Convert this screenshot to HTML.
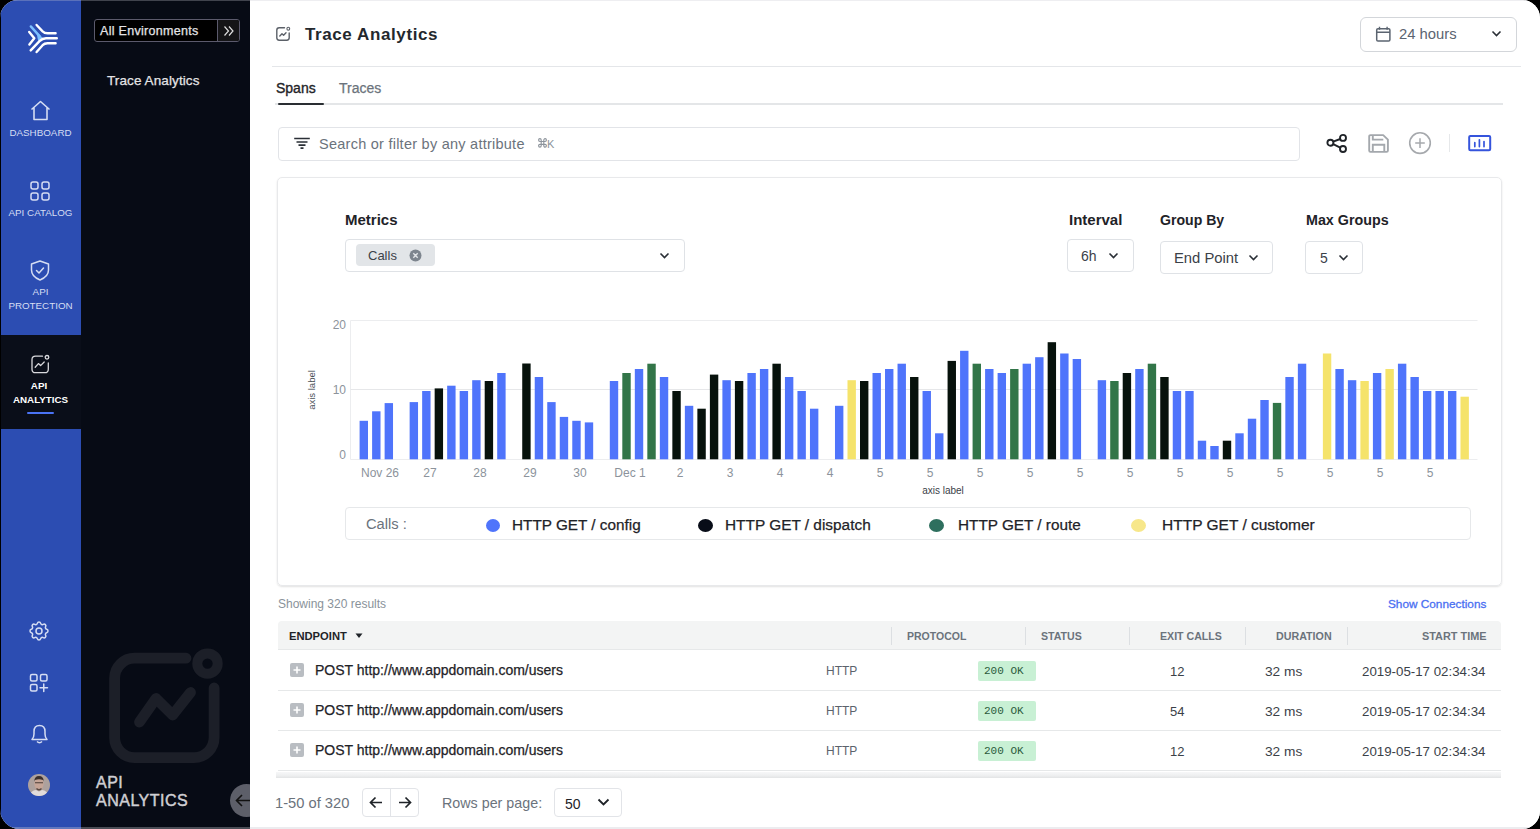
<!DOCTYPE html>
<html><head><meta charset="utf-8">
<style>
*{box-sizing:border-box;margin:0;padding:0}
html,body{width:1540px;height:829px;background:#000;overflow:hidden;font-family:"Liberation Sans",sans-serif}
.abs{position:absolute}
#frame{position:absolute;left:0;top:0;width:1540px;height:829px;border-radius:18px 18px 18px 20px;overflow:hidden;background:#fff}
#nav{position:absolute;left:0;top:0;width:81px;height:829px;background:#2c4db2}
#side{position:absolute;left:81px;top:0;width:169px;height:829px;background:#070b15}
.navlbl{position:absolute;left:0;width:81px;text-align:center;color:#d5ddf3;font-size:9.8px;line-height:13px}
.t{position:absolute;white-space:nowrap}
.med{-webkit-text-stroke:0.25px currentColor}
</style></head><body>
<div id="frame">
  <div id="nav">
    <!-- logo -->
    <svg class="abs" style="left:20px;top:16px" width="44" height="44" viewBox="20 16 44 44">
      <path d="M36.3 31.8 L42.8 38.1 L38.2 41 Z" fill="#7cc0ff"/>
      <path d="M30.8 26.4 L40 36.6" stroke="#7cc0ff" stroke-width="2.4" stroke-linecap="round" fill="none"/>
      <path d="M29.2 32 L34.3 38.3 L29.4 44.6" stroke="#fff" stroke-width="2.4" stroke-linecap="round" stroke-linejoin="round" fill="none"/>
      <path d="M36.6 25 L42.6 31.4 Q44.5 33.3 47.5 33.3 L55.6 33.3" stroke="#fff" stroke-width="2.4" stroke-linecap="round" fill="none"/>
      <path d="M36.6 52 L42.6 45.2 Q44.5 43.3 47.5 43.3 L55.6 43.3" stroke="#fff" stroke-width="2.4" stroke-linecap="round" fill="none"/>
      <path d="M30.7 50.4 L39.5 41.2 Q42.5 38.3 46 38.3 L56.8 38.3" stroke="#fff" stroke-width="2.4" stroke-linecap="round" fill="none"/>
    </svg>
    <!-- home -->
    <svg class="abs" style="left:29px;top:100px" width="23" height="21" viewBox="0 0 23 21">
      <path d="M2.5 9.5 L11.5 1.5 L20.5 9.5 M5 7.5 V19.5 H18 V7.5" stroke="#d5ddf3" stroke-width="1.6" fill="none" stroke-linejoin="round"/>
    </svg>
    <div class="navlbl" style="top:126px">DASHBOARD</div>
    <!-- catalog -->
    <svg class="abs" style="left:30px;top:181px" width="20" height="20" viewBox="0 0 20 20">
      <rect x="1" y="1" width="7" height="7" rx="2" stroke="#d5ddf3" stroke-width="1.5" fill="none"/>
      <rect x="12" y="1" width="7" height="7" rx="2" stroke="#d5ddf3" stroke-width="1.5" fill="none"/>
      <rect x="1" y="12" width="7" height="7" rx="2" stroke="#d5ddf3" stroke-width="1.5" fill="none"/>
      <rect x="12" y="12" width="7" height="7" rx="2" stroke="#d5ddf3" stroke-width="1.5" fill="none"/>
    </svg>
    <div class="navlbl" style="top:206px">API CATALOG</div>
    <!-- shield -->
    <svg class="abs" style="left:30px;top:260px" width="20" height="21" viewBox="0 0 20 21">
      <path d="M10 1 L18.5 4 V10 Q18.5 16.5 10 20 Q1.5 16.5 1.5 10 V4 Z" stroke="#d5ddf3" stroke-width="1.5" fill="none" stroke-linejoin="round"/>
      <path d="M6.5 10.5 L9 13 L13.5 8" stroke="#d5ddf3" stroke-width="1.5" fill="none" stroke-linecap="round" stroke-linejoin="round"/>
    </svg>
    <div class="navlbl" style="top:285px">API</div>
    <div class="navlbl" style="top:299px">PROTECTION</div>
    <!-- active -->
    <div class="abs" style="left:0;top:335px;width:81px;height:94px;background:#0a0e19"></div>
    <svg class="abs" style="left:30px;top:354px" width="21" height="21" viewBox="0 0 21 21">
      <path d="M12.5 2.2 H5.5 Q2 2.2 2 5.7 V15.2 Q2 18.7 5.5 18.7 H14.8 Q18.3 18.7 18.3 15.2 V9" stroke="#d9d9dd" stroke-width="1.3" fill="none" stroke-linecap="round"/>
      <circle cx="17" cy="3.3" r="1.8" stroke="#d9d9dd" stroke-width="1.3" fill="none"/>
      <path d="M5.2 13.2 L8.4 9.6 L10.6 11.6 L14.2 8" stroke="#d9d9dd" stroke-width="1.3" fill="none" stroke-linecap="round" stroke-linejoin="round"/>
    </svg>
    <div class="navlbl" style="top:379px;left:-1.5px;color:#fff;font-weight:bold">API</div>
    <div class="navlbl" style="top:393px;color:#fff;font-weight:bold">ANALYTICS</div>
    <div class="abs" style="left:26.5px;top:412px;width:27.5px;height:2px;border-radius:1px;background:#4a73f5"></div>
    <!-- gear -->
    <svg class="abs" style="left:27px;top:619px" width="24" height="24" viewBox="0 0 24 24">
      <path d="M10.325 4.317c.426 -1.756 2.924 -1.756 3.35 0a1.724 1.724 0 0 0 2.573 1.066c1.543 -.94 3.31 .826 2.37 2.37a1.724 1.724 0 0 0 1.065 2.572c1.756 .426 1.756 2.924 0 3.35a1.724 1.724 0 0 0 -1.066 2.573c.94 1.543 -.826 3.31 -2.37 2.37a1.724 1.724 0 0 0 -2.572 1.065c-.426 1.756 -2.924 1.756 -3.35 0a1.724 1.724 0 0 0 -2.573 -1.066c-1.543 .94 -3.31 -.826 -2.37 -2.37a1.724 1.724 0 0 0 -1.065 -2.572c-1.756 -.426 -1.756 -2.924 0 -3.35a1.724 1.724 0 0 0 1.066 -2.573c-.94 -1.543 .826 -3.31 2.37 -2.37c1 .608 2.296 .07 2.572 -1.065z" stroke="#d5ddf3" stroke-width="1.5" fill="none"/>
      <circle cx="12" cy="12" r="3" stroke="#d5ddf3" stroke-width="1.5" fill="none"/>
    </svg>
    <!-- apps plus -->
    <svg class="abs" style="left:29px;top:673px" width="20" height="20" viewBox="0 0 20 20">
      <rect x="1.5" y="1.5" width="6.5" height="6.5" rx="1.5" stroke="#d5ddf3" stroke-width="1.5" fill="none"/>
      <rect x="11.5" y="1.5" width="6.5" height="6.5" rx="1.5" stroke="#d5ddf3" stroke-width="1.5" fill="none"/>
      <rect x="1.5" y="11.5" width="6.5" height="6.5" rx="1.5" stroke="#d5ddf3" stroke-width="1.5" fill="none"/>
      <path d="M14.75 11 V18.5 M11 14.75 H18.5" stroke="#d5ddf3" stroke-width="1.5" stroke-linecap="round"/>
    </svg>
    <!-- bell -->
    <svg class="abs" style="left:29px;top:723px" width="21" height="22" viewBox="0 0 21 22">
      <path d="M3 16.5 Q5 14.5 5 11 V8.5 Q5 2.5 10.5 2.5 Q16 2.5 16 8.5 V11 Q16 14.5 18 16.5 Z" stroke="#d5ddf3" stroke-width="1.5" fill="none" stroke-linejoin="round"/>
      <path d="M8 18.5 Q10.5 21 13 18.5" stroke="#d5ddf3" stroke-width="1.5" fill="none"/>
    </svg>
    <!-- avatar -->
    <svg class="abs" style="left:28px;top:774px" width="22" height="22" viewBox="0 0 22 22">
      <clipPath id="avc"><circle cx="11" cy="11" r="11"/></clipPath>
      <g clip-path="url(#avc)">
        <rect width="22" height="22" fill="#ada19d"/>
        <ellipse cx="11" cy="10" rx="4.6" ry="6.2" fill="#c6a597"/>
        <path d="M6.3 7.5 Q6.3 2 11 2 Q15.7 2 15.7 7.5 L15 6 Q11 4.5 7 6 Z" fill="#3b302c"/>
        <path d="M7 8.8 H15" stroke="#4a3c36" stroke-width="1.1"/>
        <path d="M8.5 14.5 Q11 17 13.5 14.5" stroke="#5c4a42" stroke-width="1.4" fill="none"/>
        <path d="M1 22 Q3 16.5 8 16 L11 17.5 L14 16 Q19 16.5 21 22 Z" fill="#e2dcda"/>
      </g>
    </svg>
  </div>
  <div id="side">
    <div class="abs" style="left:13px;top:19px;width:146px;height:23px;border:1px solid #5b5a6c;border-radius:3px;background:#000;overflow:hidden">
      <div class="t med" style="left:5px;top:3px;font-size:12.5px;letter-spacing:0.3px;color:#e4e4e6;line-height:16px">All Environments</div>
      <div class="abs" style="left:122px;top:0;width:23px;height:21px;background:#151517;border-left:1px solid #5b5a6c"></div>
      <svg class="abs" style="left:128px;top:5px" width="12" height="12" viewBox="0 0 12 12"><path d="M1.5 1.5 L5.5 6 L1.5 10.5 M6 1.5 L10 6 L6 10.5" stroke="#ddd" stroke-width="1.2" fill="none"/></svg>
    </div>
    <div class="t med" style="left:26px;top:73px;font-size:13.5px;letter-spacing:0.1px;color:#e4e4e6;line-height:16px">Trace Analytics</div>
    <!-- watermark -->
    <svg class="abs" style="left:0;top:0" width="169" height="829" viewBox="81 0 169 829">
      <path d="M186 658.2 H134.6 A20 20 0 0 0 114.6 678.2 V737.6 A20 20 0 0 0 134.6 757.6 H194.1 A20 20 0 0 0 214.1 737.6 V688" stroke="#1c1f28" stroke-width="10.8" fill="none" stroke-linecap="round"/>
      <circle cx="207.5" cy="663.6" r="10.2" stroke="#1c1f28" stroke-width="10" fill="none"/>
      <path d="M139.5 722 L156 698.5 L172.7 715 L190.5 692.5" stroke="#1c1f28" stroke-width="10.8" fill="none" stroke-linecap="round" stroke-linejoin="round"/>
    </svg>
    <div class="t" style="left:15px;top:774px;font-size:16px;letter-spacing:0.5px;line-height:18px;color:#cfcfd3;-webkit-text-stroke:0.45px currentColor">API<br>ANALYTICS</div>
  </div>
  <div class="abs" style="left:230px;top:784px;width:33px;height:33px;border-radius:50%;background:#5d5f69"></div>
  <svg class="abs" style="left:235px;top:794px" width="15" height="13" viewBox="0 0 15 13"><path d="M7 1 L1.5 6.5 L7 12 M1.5 6.5 H15" stroke="#111" stroke-width="1.6" fill="none"/></svg>

  <!-- MAIN -->

  <div id="main" class="abs" style="left:250px;top:0;width:1290px;height:829px;background:#fff">
  </div>
  <!-- header -->
  <svg class="abs" style="left:275px;top:26px" width="16" height="16" viewBox="0 0 16 16">
    <path d="M9.5 1.8 H4.2 Q1.8 1.8 1.8 4.2 V11.8 Q1.8 14.2 4.2 14.2 H11.8 Q14.2 14.2 14.2 11.8 V7" stroke="#5b6068" stroke-width="1.4" fill="none" stroke-linecap="round"/>
    <circle cx="13.3" cy="2.7" r="1.4" stroke="#5b6068" stroke-width="1.1" fill="none"/>
    <path d="M4.8 10 L7 7.8 L8.6 9.2 L11 6.8" stroke="#5b6068" stroke-width="1.4" fill="none" stroke-linecap="round" stroke-linejoin="round"/>
  </svg>
  <div class="t" style="left:305px;top:23.5px;font-size:17px;letter-spacing:0.6px;font-weight:bold;color:#24282d;line-height:22px">Trace Analytics</div>
  <div class="abs" style="left:1359.5px;top:16.5px;width:157px;height:35px;border:1px solid #d3d6da;border-radius:6px"></div>
  <svg class="abs" style="left:1375px;top:26px" width="16" height="16" viewBox="0 0 16 16">
    <rect x="1.7" y="2.7" width="13.2" height="12.3" rx="1.3" stroke="#5b6470" stroke-width="1.5" fill="none"/>
    <path d="M1.7 6.2 H14.9 M4.5 0.8 V3.8 M12.1 0.8 V3.8" stroke="#5b6470" stroke-width="1.4"/>
  </svg>
  <div class="t" style="left:1399px;top:26px;font-size:14.8px;color:#5b6470;line-height:17px">24 hours</div>
  <svg class="abs" style="left:1490.7px;top:30px" width="11" height="8" viewBox="0 0 11 8"><path d="M1.5 1.5 L5.5 5.5 L9.5 1.5" stroke="#2a2f36" stroke-width="1.6" fill="none"/></svg>
  <div class="abs" style="left:272px;top:66px;width:1249px;height:1px;background:#e4e6e9"></div>
  <!-- tabs -->
  <div class="t med" style="left:276px;top:80px;-webkit-text-stroke:0.35px currentColor;font-size:14px;color:#1f2328;line-height:17px">Spans</div>
  <div class="t med" style="left:339px;top:80px;font-size:14px;color:#6b737c;line-height:17px">Traces</div>
  <div class="abs" style="left:275px;top:103px;width:1228px;height:1.5px;background:#e4e6e8"></div>
  <div class="abs" style="left:278px;top:102.8px;width:46px;height:2px;border-radius:1px;background:#2a2e33"></div>
  <!-- search -->
  <div class="abs" style="left:278px;top:127px;width:1022px;height:33.5px;border:1px solid #e2e4e8;border-radius:4px"></div>
  <svg class="abs" style="left:294px;top:137px" width="16" height="13" viewBox="0 0 16 13">
    <path d="M0.2 1.5 H15.8 M2.5 5 H13.5 M4.5 8.2 H11.5 M6.5 11.2 H9.5" stroke="#2a2f36" stroke-width="1.7"/>
  </svg>
  <div class="t" style="left:319px;top:136px;font-size:14.5px;letter-spacing:0.25px;color:#6b737c;line-height:17px">Search or filter by any attribute</div>
  <svg class="abs" style="left:537.5px;top:138.3px" width="9" height="9.8" viewBox="0 0 9 9" preserveAspectRatio="none"><path d="M3.2 3.2 V1.9 A1.3 1.3 0 1 0 1.9 3.2 H7.1 A1.3 1.3 0 1 0 5.8 1.9 V7.1 A1.3 1.3 0 1 0 7.1 5.8 H1.9 A1.3 1.3 0 1 0 3.2 7.1 Z" stroke="#8c939b" stroke-width="1.1" fill="none"/></svg>
  <div class="t" style="left:547px;top:137.7px;font-size:11px;color:#8c939b;line-height:13px">K</div>
  <!-- toolbar icons -->
  <svg class="abs" style="left:1325px;top:133px" width="24" height="21" viewBox="0 0 24 21">
    <circle cx="5.4" cy="9.8" r="3" stroke="#1f2328" stroke-width="1.9" fill="none"/>
    <circle cx="18" cy="4.9" r="3" stroke="#1f2328" stroke-width="1.9" fill="none"/>
    <circle cx="18" cy="16" r="3" stroke="#1f2328" stroke-width="1.9" fill="none"/>
    <path d="M8.2 8.6 L15.2 6 M8.2 11.2 L15.2 14.6" stroke="#1f2328" stroke-width="1.9"/>
  </svg>
  <svg class="abs" style="left:1367px;top:133px" width="23" height="21" viewBox="0 0 23 21">
    <path d="M2.2 3.4 Q2.2 2.1 3.5 2.1 H16.2 L20.9 6.6 V17.6 Q20.9 18.9 19.6 18.9 H3.5 Q2.2 18.9 2.2 17.6 Z" stroke="#a4a8ad" stroke-width="1.9" fill="none" stroke-linejoin="round"/>
    <path d="M5.8 2.1 V6.6 H16.3 M5.8 18.9 V11.8 H17.3 V18.9" stroke="#a4a8ad" stroke-width="1.9" fill="none"/>
  </svg>
  <svg class="abs" style="left:1408px;top:131px" width="24" height="24" viewBox="0 0 24 24">
    <circle cx="12" cy="12.1" r="10.3" stroke="#a6a9ad" stroke-width="1.6" fill="none"/>
    <path d="M12 7.3 V16.9 M7.2 12.1 H16.8" stroke="#a6a9ad" stroke-width="1.5"/>
  </svg>
  <div class="abs" style="left:1449px;top:134px;width:1px;height:18px;background:#e6e8ea"></div>
  <svg class="abs" style="left:1467px;top:134px" width="25" height="18" viewBox="0 0 25 18">
    <rect x="2.2" y="1.9" width="21" height="14.3" rx="1.2" stroke="#3554dc" stroke-width="2" fill="none"/>
    <path d="M7.8 12.6 V8.7 M12.4 12.6 V5.8 M17 12.6 V7.6" stroke="#3554dc" stroke-width="1.7" stroke-linecap="round"/>
  </svg>
  <!-- chart card -->
  <div class="abs" style="left:277px;top:177px;width:1224.5px;height:409px;border:1px solid #e8e9eb;border-radius:5px;box-shadow:0 1px 2px rgba(0,0,0,0.12)"></div>
  <div class="t" style="left:345px;top:211px;font-size:15px;font-weight:bold;color:#1f2328;line-height:18px">Metrics</div>
  <div class="abs" style="left:345px;top:239px;width:340px;height:33px;border:1px solid #dfe2e6;border-radius:4px"></div>
  <div class="abs" style="left:355.7px;top:244px;width:79.5px;height:22px;background:#e2e5e8;border-radius:4px"></div>
  <div class="t" style="left:368px;top:247.5px;font-size:13px;color:#3b4148;line-height:16px">Calls</div>
  <svg class="abs" style="left:409px;top:249px" width="13" height="13" viewBox="0 0 13 13"><circle cx="6.5" cy="6.5" r="6" fill="#7d858e"/><path d="M4.3 4.3 L8.7 8.7 M8.7 4.3 L4.3 8.7" stroke="#e2e5e8" stroke-width="1.4"/></svg>
  <svg class="abs" style="left:659px;top:252px" width="11" height="8" viewBox="0 0 11 8"><path d="M1.5 1.5 L5.5 5.5 L9.5 1.5" stroke="#2a2f36" stroke-width="1.6" fill="none"/></svg>

  <div class="t" style="left:1069px;top:211px;font-size:15px;font-weight:bold;color:#1f2328;line-height:18px">Interval</div>
  <div class="abs" style="left:1067px;top:239px;width:67px;height:33px;border:1px solid #dfe2e6;border-radius:4px"></div>
  <div class="t" style="left:1081px;top:248px;font-size:14px;color:#3b4148;line-height:17px">6h</div>
  <svg class="abs" style="left:1108px;top:251.5px" width="11" height="8" viewBox="0 0 11 8"><path d="M1.5 1.5 L5.5 5.5 L9.5 1.5" stroke="#2a2f36" stroke-width="1.6" fill="none"/></svg>

  <div class="t" style="left:1160px;top:211px;font-size:14.1px;font-weight:bold;color:#1f2328;line-height:18px">Group By</div>
  <div class="abs" style="left:1160px;top:241px;width:113px;height:33px;border:1px solid #dfe2e6;border-radius:4px"></div>
  <div class="t" style="left:1174px;top:250px;font-size:14.8px;color:#3b4148;line-height:17px">End Point</div>
  <svg class="abs" style="left:1248px;top:254px" width="11" height="8" viewBox="0 0 11 8"><path d="M1.5 1.5 L5.5 5.5 L9.5 1.5" stroke="#2a2f36" stroke-width="1.6" fill="none"/></svg>

  <div class="t" style="left:1306px;top:211px;font-size:14.3px;font-weight:bold;color:#1f2328;line-height:18px">Max Groups</div>
  <div class="abs" style="left:1305px;top:241px;width:58px;height:33px;border:1px solid #dfe2e6;border-radius:4px"></div>
  <div class="t" style="left:1320px;top:250px;font-size:14px;color:#3b4148;line-height:17px">5</div>
  <svg class="abs" style="left:1338px;top:254px" width="11" height="8" viewBox="0 0 11 8"><path d="M1.5 1.5 L5.5 5.5 L9.5 1.5" stroke="#2a2f36" stroke-width="1.6" fill="none"/></svg>

  <!-- chart -->
  <svg class="abs" style="left:0;top:0" width="1540" height="829" viewBox="0 0 1540 829">
    <path d="M1477.5 320.5 H350.5 V459.5 H1477.5" fill="none" stroke="#ecedef" stroke-width="1"/>
    <line x1="350.5" y1="389.5" x2="1477.5" y2="389.5" stroke="#e6e7e9" stroke-width="1"/>
    <rect x="359.60" y="420.8" width="8.4" height="38.5" fill="#4f74fb"/>
<rect x="372.11" y="411.3" width="8.4" height="48.0" fill="#4f74fb"/>
<rect x="384.62" y="403.1" width="8.4" height="56.2" fill="#4f74fb"/>
<rect x="409.64" y="402.1" width="8.4" height="57.2" fill="#4f74fb"/>
<rect x="422.15" y="391.0" width="8.4" height="68.3" fill="#4f74fb"/>
<rect x="434.66" y="388.4" width="8.4" height="70.9" fill="#07120c"/>
<rect x="447.17" y="385.7" width="8.4" height="73.6" fill="#4f74fb"/>
<rect x="459.68" y="391.0" width="8.4" height="68.3" fill="#4f74fb"/>
<rect x="472.19" y="380.2" width="8.4" height="79.1" fill="#4f74fb"/>
<rect x="484.70" y="381.0" width="8.4" height="78.3" fill="#07120c"/>
<rect x="497.21" y="373.0" width="8.4" height="86.3" fill="#4f74fb"/>
<rect x="522.23" y="363.5" width="8.4" height="95.8" fill="#07120c"/>
<rect x="534.74" y="377.0" width="8.4" height="82.3" fill="#4f74fb"/>
<rect x="547.25" y="402.1" width="8.4" height="57.2" fill="#4f74fb"/>
<rect x="559.76" y="416.9" width="8.4" height="42.4" fill="#4f74fb"/>
<rect x="572.27" y="420.8" width="8.4" height="38.5" fill="#4f74fb"/>
<rect x="584.78" y="422.4" width="8.4" height="36.9" fill="#4f74fb"/>
<rect x="609.80" y="381.0" width="8.4" height="78.3" fill="#4f74fb"/>
<rect x="622.31" y="373.0" width="8.4" height="86.3" fill="#327548"/>
<rect x="634.82" y="369.0" width="8.4" height="90.3" fill="#4f74fb"/>
<rect x="647.33" y="363.7" width="8.4" height="95.6" fill="#327548"/>
<rect x="659.84" y="377.0" width="8.4" height="82.3" fill="#4f74fb"/>
<rect x="672.35" y="391.0" width="8.4" height="68.3" fill="#07120c"/>
<rect x="684.86" y="405.8" width="8.4" height="53.5" fill="#4f74fb"/>
<rect x="697.37" y="408.7" width="8.4" height="50.6" fill="#07120c"/>
<rect x="709.88" y="374.6" width="8.4" height="84.7" fill="#07120c"/>
<rect x="722.39" y="380.2" width="8.4" height="79.1" fill="#4f74fb"/>
<rect x="734.90" y="381.0" width="8.4" height="78.3" fill="#07120c"/>
<rect x="747.41" y="373.0" width="8.4" height="86.3" fill="#4f74fb"/>
<rect x="759.92" y="369.0" width="8.4" height="90.3" fill="#4f74fb"/>
<rect x="772.43" y="363.7" width="8.4" height="95.6" fill="#07120c"/>
<rect x="784.94" y="377.0" width="8.4" height="82.3" fill="#4f74fb"/>
<rect x="797.45" y="391.0" width="8.4" height="68.3" fill="#4f74fb"/>
<rect x="809.96" y="408.7" width="8.4" height="50.6" fill="#4f74fb"/>
<rect x="834.98" y="405.8" width="8.4" height="53.5" fill="#4f74fb"/>
<rect x="847.49" y="380.2" width="8.4" height="79.1" fill="#f5e36b"/>
<rect x="860.00" y="381.0" width="8.4" height="78.3" fill="#07120c"/>
<rect x="872.51" y="373.0" width="8.4" height="86.3" fill="#4f74fb"/>
<rect x="885.02" y="369.0" width="8.4" height="90.3" fill="#4f74fb"/>
<rect x="897.53" y="363.7" width="8.4" height="95.6" fill="#4f74fb"/>
<rect x="910.04" y="377.0" width="8.4" height="82.3" fill="#07120c"/>
<rect x="922.55" y="391.0" width="8.4" height="68.3" fill="#4f74fb"/>
<rect x="935.06" y="433.3" width="8.4" height="26.0" fill="#4f74fb"/>
<rect x="947.57" y="360.9" width="8.4" height="98.4" fill="#07120c"/>
<rect x="960.08" y="350.8" width="8.4" height="108.5" fill="#4f74fb"/>
<rect x="972.59" y="363.7" width="8.4" height="95.6" fill="#327548"/>
<rect x="985.10" y="369.0" width="8.4" height="90.3" fill="#4f74fb"/>
<rect x="997.61" y="373.0" width="8.4" height="86.3" fill="#4f74fb"/>
<rect x="1010.12" y="369.0" width="8.4" height="90.3" fill="#327548"/>
<rect x="1022.63" y="363.7" width="8.4" height="95.6" fill="#4f74fb"/>
<rect x="1035.14" y="357.2" width="8.4" height="102.1" fill="#4f74fb"/>
<rect x="1047.65" y="342.2" width="8.4" height="117.1" fill="#07120c"/>
<rect x="1060.16" y="353.5" width="8.4" height="105.8" fill="#4f74fb"/>
<rect x="1072.67" y="359.0" width="8.4" height="100.3" fill="#4f74fb"/>
<rect x="1097.69" y="380.2" width="8.4" height="79.1" fill="#4f74fb"/>
<rect x="1110.20" y="381.0" width="8.4" height="78.3" fill="#327548"/>
<rect x="1122.71" y="373.0" width="8.4" height="86.3" fill="#07120c"/>
<rect x="1135.22" y="369.0" width="8.4" height="90.3" fill="#4f74fb"/>
<rect x="1147.73" y="363.7" width="8.4" height="95.6" fill="#327548"/>
<rect x="1160.24" y="377.0" width="8.4" height="82.3" fill="#07120c"/>
<rect x="1172.75" y="391.0" width="8.4" height="68.3" fill="#4f74fb"/>
<rect x="1185.26" y="391.0" width="8.4" height="68.3" fill="#4f74fb"/>
<rect x="1197.77" y="440.7" width="8.4" height="18.6" fill="#4f74fb"/>
<rect x="1210.28" y="446.0" width="8.4" height="13.3" fill="#4f74fb"/>
<rect x="1222.79" y="440.7" width="8.4" height="18.6" fill="#07120c"/>
<rect x="1235.30" y="433.3" width="8.4" height="26.0" fill="#4f74fb"/>
<rect x="1247.81" y="418.7" width="8.4" height="40.6" fill="#4f74fb"/>
<rect x="1260.32" y="400.0" width="8.4" height="59.3" fill="#4f74fb"/>
<rect x="1272.83" y="402.9" width="8.4" height="56.4" fill="#327548"/>
<rect x="1285.34" y="377.0" width="8.4" height="82.3" fill="#4f74fb"/>
<rect x="1297.85" y="363.7" width="8.4" height="95.6" fill="#4f74fb"/>
<rect x="1322.87" y="353.5" width="8.4" height="105.8" fill="#f5e36b"/>
<rect x="1335.38" y="369.0" width="8.4" height="90.3" fill="#4f74fb"/>
<rect x="1347.89" y="380.2" width="8.4" height="79.1" fill="#4f74fb"/>
<rect x="1360.40" y="381.0" width="8.4" height="78.3" fill="#f5e36b"/>
<rect x="1372.91" y="373.0" width="8.4" height="86.3" fill="#4f74fb"/>
<rect x="1385.42" y="369.0" width="8.4" height="90.3" fill="#f5e36b"/>
<rect x="1397.93" y="363.7" width="8.4" height="95.6" fill="#4f74fb"/>
<rect x="1410.44" y="377.0" width="8.4" height="82.3" fill="#4f74fb"/>
<rect x="1422.95" y="391.0" width="8.4" height="68.3" fill="#4f74fb"/>
<rect x="1435.46" y="391.0" width="8.4" height="68.3" fill="#4f74fb"/>
<rect x="1447.97" y="391.0" width="8.4" height="68.3" fill="#4f74fb"/>
<rect x="1460.48" y="396.7" width="8.4" height="62.6" fill="#f5e36b"/>
    <g font-family="Liberation Sans" font-size="12" fill="#8c939b" text-anchor="end">
      <text x="346" y="329">20</text><text x="346" y="394">10</text><text x="346" y="459">0</text>
    </g>
    <g font-family="Liberation Sans" font-size="12" fill="#8c939b" text-anchor="middle">
      <text x="380" y="476.5">Nov 26</text>
<text x="430" y="476.5">27</text>
<text x="480" y="476.5">28</text>
<text x="530" y="476.5">29</text>
<text x="580" y="476.5">30</text>
<text x="630" y="476.5">Dec 1</text>
<text x="680" y="476.5">2</text>
<text x="730" y="476.5">3</text>
<text x="780" y="476.5">4</text>
<text x="830" y="476.5">4</text>
<text x="880" y="476.5">5</text>
<text x="930" y="476.5">5</text>
<text x="980" y="476.5">5</text>
<text x="1030" y="476.5">5</text>
<text x="1080" y="476.5">5</text>
<text x="1130" y="476.5">5</text>
<text x="1180" y="476.5">5</text>
<text x="1230" y="476.5">5</text>
<text x="1280" y="476.5">5</text>
<text x="1330" y="476.5">5</text>
<text x="1380" y="476.5">5</text>
<text x="1430" y="476.5">5</text>
    </g>
    <text x="943" y="494" font-family="Liberation Sans" font-size="10" fill="#3b4148" text-anchor="middle">axis label</text>
    <text transform="translate(315 390) rotate(-90)" font-family="Liberation Sans" font-size="9.5" fill="#4b5158" text-anchor="middle">axis label</text>
  </svg>
  <!-- legend -->
  <div class="abs" style="left:345px;top:507px;width:1126px;height:33px;border:1px solid #e6e8ea;border-radius:4px"></div>
  <div class="t" style="left:366px;top:516px;font-size:14.7px;color:#6b737c;line-height:17px">Calls :</div>
  <div class="abs" style="left:486px;top:519px;width:14px;height:13px;border-radius:50%;background:#4f74fb"></div>
  <div class="t med" style="left:512px;top:516px;font-size:15.3px;color:#1f2328;line-height:17px">HTTP GET / config</div>
  <div class="abs" style="left:698px;top:519px;width:15px;height:13px;border-radius:50%;background:#080d18"></div>
  <div class="t med" style="left:725px;top:516px;font-size:15.4px;color:#1f2328;line-height:17px">HTTP GET / dispatch</div>
  <div class="abs" style="left:929px;top:519px;width:15px;height:13px;border-radius:50%;background:#2e6f5e"></div>
  <div class="t med" style="left:958px;top:516px;font-size:15.3px;color:#1f2328;line-height:17px">HTTP GET / route</div>
  <div class="abs" style="left:1131px;top:519px;width:15px;height:13px;border-radius:50%;background:#f7e78a"></div>
  <div class="t med" style="left:1162px;top:516px;font-size:15.5px;color:#1f2328;line-height:17px">HTTP GET / customer</div>

  <!-- table -->
  <div class="t" style="left:278px;top:598px;font-size:12px;color:#89929a;line-height:13px">Showing 320 results</div>
  <div class="t med" style="left:1388px;top:598px;font-size:11.8px;color:#4a6ff2;line-height:13px;-webkit-text-stroke:0.3px currentColor">Show Connections</div>
  <div class="abs" style="left:278px;top:621px;width:1223px;height:29px;background:#f3f4f4;border-bottom:1px solid #e6e8e9;border-radius:4px 4px 0 0"></div>
  <div class="t" style="left:289px;top:630px;font-size:11.2px;color:#1f2328;line-height:13px;font-weight:bold">ENDPOINT</div>
  <svg class="abs" style="left:355px;top:633px" width="8" height="6" viewBox="0 0 8 6"><path d="M0.5 0.5 H7.5 L4 5 Z" fill="#1f2328"/></svg>
  <div class="abs" style="left:891px;top:627px;width:1px;height:18px;background:#dcdfe2"></div>
  <div class="abs" style="left:1025px;top:627px;width:1px;height:18px;background:#dcdfe2"></div>
  <div class="abs" style="left:1129px;top:627px;width:1px;height:18px;background:#dcdfe2"></div>
  <div class="abs" style="left:1245px;top:627px;width:1px;height:18px;background:#dcdfe2"></div>
  <div class="abs" style="left:1347px;top:627px;width:1px;height:18px;background:#dcdfe2"></div>
  <div class="t" style="left:907px;top:630px;font-size:10.5px;color:#6b737c;line-height:13px;font-weight:bold">PROTOCOL</div>
  <div class="t" style="left:1041px;top:630px;font-size:10.6px;color:#6b737c;line-height:13px;font-weight:bold">STATUS</div>
  <div class="t" style="left:1160px;top:630px;font-size:10.6px;color:#6b737c;line-height:13px;font-weight:bold">EXIT CALLS</div>
  <div class="t" style="left:1276px;top:630px;font-size:10.7px;color:#6b737c;line-height:13px;font-weight:bold">DURATION</div>
  <div class="t" style="left:1422px;top:630px;font-size:10.9px;color:#6b737c;line-height:13px;font-weight:bold">START TIME</div>
  <div class="abs" style="left:278px;top:690px;width:1223px;height:1px;background:#e6e8e9"></div>
  <div class="abs" style="left:290px;top:663px;width:14px;height:14px;background:#b9bdc2;border-radius:2px"></div>
  <svg class="abs" style="left:290px;top:663px" width="14" height="14" viewBox="0 0 14 14"><path d="M7 3.5 V10.5 M3.5 7 H10.5" stroke="#fff" stroke-width="1.6"/></svg>
  <div class="t med" style="left:315px;top:662px;font-size:14px;color:#1f2328;line-height:16px">POST http://www.appdomain.com/users</div>
  <div class="t" style="left:826px;top:663px;font-size:12px;color:#5b636c;line-height:16px">HTTP</div>
  <div class="abs" style="left:978px;top:661px;width:58px;height:20px;background:#c8f0d4;border-radius:2px"></div>
  <div class="t" style="left:984px;top:664px;font-family:'Liberation Mono',monospace;font-size:11px;color:#2a5a3b;line-height:15px">200 OK</div>
  <div class="t" style="left:1170px;top:663.5px;font-size:13px;color:#3b4148;line-height:16px">12</div>
  <div class="t" style="left:1265px;top:663.5px;font-size:13.7px;color:#3b4148;line-height:16px">32 ms</div>
  <div class="t" style="left:1362px;top:663.5px;font-size:13.3px;color:#3b4148;line-height:16px">2019-05-17 02:34:34</div>
<div class="abs" style="left:278px;top:730px;width:1223px;height:1px;background:#e6e8e9"></div>
  <div class="abs" style="left:290px;top:703px;width:14px;height:14px;background:#b9bdc2;border-radius:2px"></div>
  <svg class="abs" style="left:290px;top:703px" width="14" height="14" viewBox="0 0 14 14"><path d="M7 3.5 V10.5 M3.5 7 H10.5" stroke="#fff" stroke-width="1.6"/></svg>
  <div class="t med" style="left:315px;top:702px;font-size:14px;color:#1f2328;line-height:16px">POST http://www.appdomain.com/users</div>
  <div class="t" style="left:826px;top:703px;font-size:12px;color:#5b636c;line-height:16px">HTTP</div>
  <div class="abs" style="left:978px;top:701px;width:58px;height:20px;background:#c8f0d4;border-radius:2px"></div>
  <div class="t" style="left:984px;top:704px;font-family:'Liberation Mono',monospace;font-size:11px;color:#2a5a3b;line-height:15px">200 OK</div>
  <div class="t" style="left:1170px;top:703.5px;font-size:13px;color:#3b4148;line-height:16px">54</div>
  <div class="t" style="left:1265px;top:703.5px;font-size:13.7px;color:#3b4148;line-height:16px">32 ms</div>
  <div class="t" style="left:1362px;top:703.5px;font-size:13.3px;color:#3b4148;line-height:16px">2019-05-17 02:34:34</div>
<div class="abs" style="left:278px;top:770px;width:1223px;height:1px;background:#e6e8e9"></div>
  <div class="abs" style="left:290px;top:743px;width:14px;height:14px;background:#b9bdc2;border-radius:2px"></div>
  <svg class="abs" style="left:290px;top:743px" width="14" height="14" viewBox="0 0 14 14"><path d="M7 3.5 V10.5 M3.5 7 H10.5" stroke="#fff" stroke-width="1.6"/></svg>
  <div class="t med" style="left:315px;top:742px;font-size:14px;color:#1f2328;line-height:16px">POST http://www.appdomain.com/users</div>
  <div class="t" style="left:826px;top:743px;font-size:12px;color:#5b636c;line-height:16px">HTTP</div>
  <div class="abs" style="left:978px;top:741px;width:58px;height:20px;background:#c8f0d4;border-radius:2px"></div>
  <div class="t" style="left:984px;top:744px;font-family:'Liberation Mono',monospace;font-size:11px;color:#2a5a3b;line-height:15px">200 OK</div>
  <div class="t" style="left:1170px;top:743.5px;font-size:13px;color:#3b4148;line-height:16px">12</div>
  <div class="t" style="left:1265px;top:743.5px;font-size:13.7px;color:#3b4148;line-height:16px">32 ms</div>
  <div class="t" style="left:1362px;top:743.5px;font-size:13.3px;color:#3b4148;line-height:16px">2019-05-17 02:34:34</div>
  <div class="abs" style="left:276px;top:772px;width:1225px;height:6px;background:linear-gradient(#f7f7f8,#eeeff0 60%,#e2e4e5)"></div>
  <!-- footer -->
  <div class="t" style="left:275px;top:795px;font-size:14.7px;color:#6b737c;line-height:17px">1-50 of 320</div>
  <div class="abs" style="left:362px;top:788px;width:57px;height:29px;border:1px solid #e2e4e8;border-radius:4px"></div>
  <div class="abs" style="left:390px;top:788px;width:1px;height:29px;background:#e2e4e8"></div>
  <svg class="abs" style="left:369px;top:796px" width="14" height="13" viewBox="0 0 14 13"><path d="M6.5 1.5 L1.5 6.5 L6.5 11.5 M1.5 6.5 H13" stroke="#1f2328" stroke-width="1.7" fill="none"/></svg>
  <svg class="abs" style="left:398px;top:796px" width="14" height="13" viewBox="0 0 14 13"><path d="M7.5 1.5 L12.5 6.5 L7.5 11.5 M12.5 6.5 H1" stroke="#1f2328" stroke-width="1.7" fill="none"/></svg>
  <div class="t" style="left:442px;top:795px;font-size:14.3px;color:#6b737c;line-height:17px">Rows per page:</div>
  <div class="abs" style="left:554px;top:788px;width:68px;height:29px;border:1px solid #e2e4e8;border-radius:4px"></div>
  <div class="t" style="left:565px;top:795.5px;font-size:14px;color:#1f2328;line-height:17px">50</div>
  <svg class="abs" style="left:597px;top:798px" width="13" height="9" viewBox="0 0 13 9"><path d="M1.5 1.5 L6.5 6.5 L11.5 1.5" stroke="#1f2328" stroke-width="1.8" fill="none"/></svg>

  <div class="abs" style="left:0;top:0;width:1px;height:829px;background:#000"></div>
  <div class="abs" style="left:0;top:0;width:1540px;height:1px;background:rgba(200,200,210,0.3)"></div>
  <div class="abs" style="left:0;top:827px;width:1540px;height:2px;background:rgba(200,200,210,0.35)"></div>
</div>
</body></html>
